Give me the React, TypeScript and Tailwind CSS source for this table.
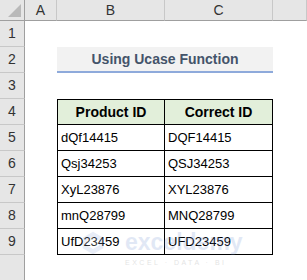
import React from "react";

const rows = [
  ["dQf14415", "DQF14415"],
  ["Qsj34253", "QSJ34253"],
  ["XyL23876", "XYL23876"],
  ["mnQ28799", "MNQ28799"],
  ["UfD23459", "UFD23459"],
];

const font = { fontFamily: '"Liberation Sans", Arial, sans-serif' };

export default function App() {
  return (
    <div
      className="relative h-[280px] w-[307px] overflow-hidden bg-white text-[#222]"
      style={font}
    >
      <div className="grid grid-cols-[25px_32px_108px_108px_34px] grid-rows-[21px_repeat(9,26px)_25px]">
        {/* column headers */}
        <div className="relative border-b border-r border-[#9f9f9f] bg-[#e6e6e6]">
          <div className="absolute bottom-[3px] right-[3px] h-0 w-0 [border-bottom:13px_solid_#b9b9b9] [border-left:13px_solid_transparent]" />
        </div>
        {["A", "B", "C", ""].map((c, i) => (
          <div
            key={i}
            className="flex items-center justify-center border-b border-r border-b-[#9f9f9f] border-r-[#c8c8c8] bg-[#e6e6e6] pt-[1px] text-[14px] text-[#333]"
          >
            {c}
          </div>
        ))}

        {Array.from({ length: 10 }).map((_, r) => {
          const n = r + 1;
          return (
            <React.Fragment key={r}>
              <div
                className={`flex items-center justify-center border-r border-r-[#9f9f9f] bg-[#e6e6e6] text-[14px] text-[#333] ${
                  n <= 9 ? "border-b border-b-[#c8c8c8]" : ""
                }`}
              >
                {n <= 9 ? n : ""}
              </div>
              <div />
              {n === 2 && (
                <div className="col-span-2 flex items-center justify-center border-b-2 border-[#8eaadb] bg-[#f2f2f2] pt-[1px] text-[14px] font-bold text-[#44546a]">
                  Using Ucase Function
                </div>
              )}
              {n === 4 && (
                <>
                  <div className="flex items-center justify-center border border-black bg-[#e2efda] text-[14px] font-bold text-black">
                    Product ID
                  </div>
                  <div className="flex items-center justify-center border-y border-r border-black bg-[#e2efda] text-[14px] font-bold text-black">
                    Correct ID
                  </div>
                </>
              )}
              {n >= 5 && n <= 9 && (
                <>
                  <div className="flex items-center border-x border-b border-black pl-[3px] pt-[1px] text-[13px] text-black">
                    {rows[n - 5][0]}
                  </div>
                  <div className="flex items-center border-b border-r border-black pl-[3px] pt-[1px] text-[13px] text-black">
                    {rows[n - 5][1]}
                  </div>
                </>
              )}
              {(n === 1 || n === 3 || n === 10) && (
                <>
                  <div />
                  <div />
                </>
              )}
              <div />
            </React.Fragment>
          );
        })}
      </div>

      {/* watermark */}
      <div className="pointer-events-none absolute left-[81px] top-[231px] flex items-start gap-[20px] opacity-20">
        <svg width="24" height="24" viewBox="0 0 26 28">
          <polygon points="13,1 25,8 25,20 13,27 1,20 1,8" fill="#8fa8d8" />
          <polygon points="13,7 20,11 20,17 13,21 6,17 6,11" fill="#ffffff" />
        </svg>
        <div className="flex flex-col leading-none">
          <span className="text-[23px] font-bold text-[#6f8fd2]">exceldemy</span>
          <span className="mt-[5px] text-[7px] tracking-[2.5px] text-[#777]">EXCEL · DATA · BI</span>
        </div>
      </div>
    </div>
  );
}
